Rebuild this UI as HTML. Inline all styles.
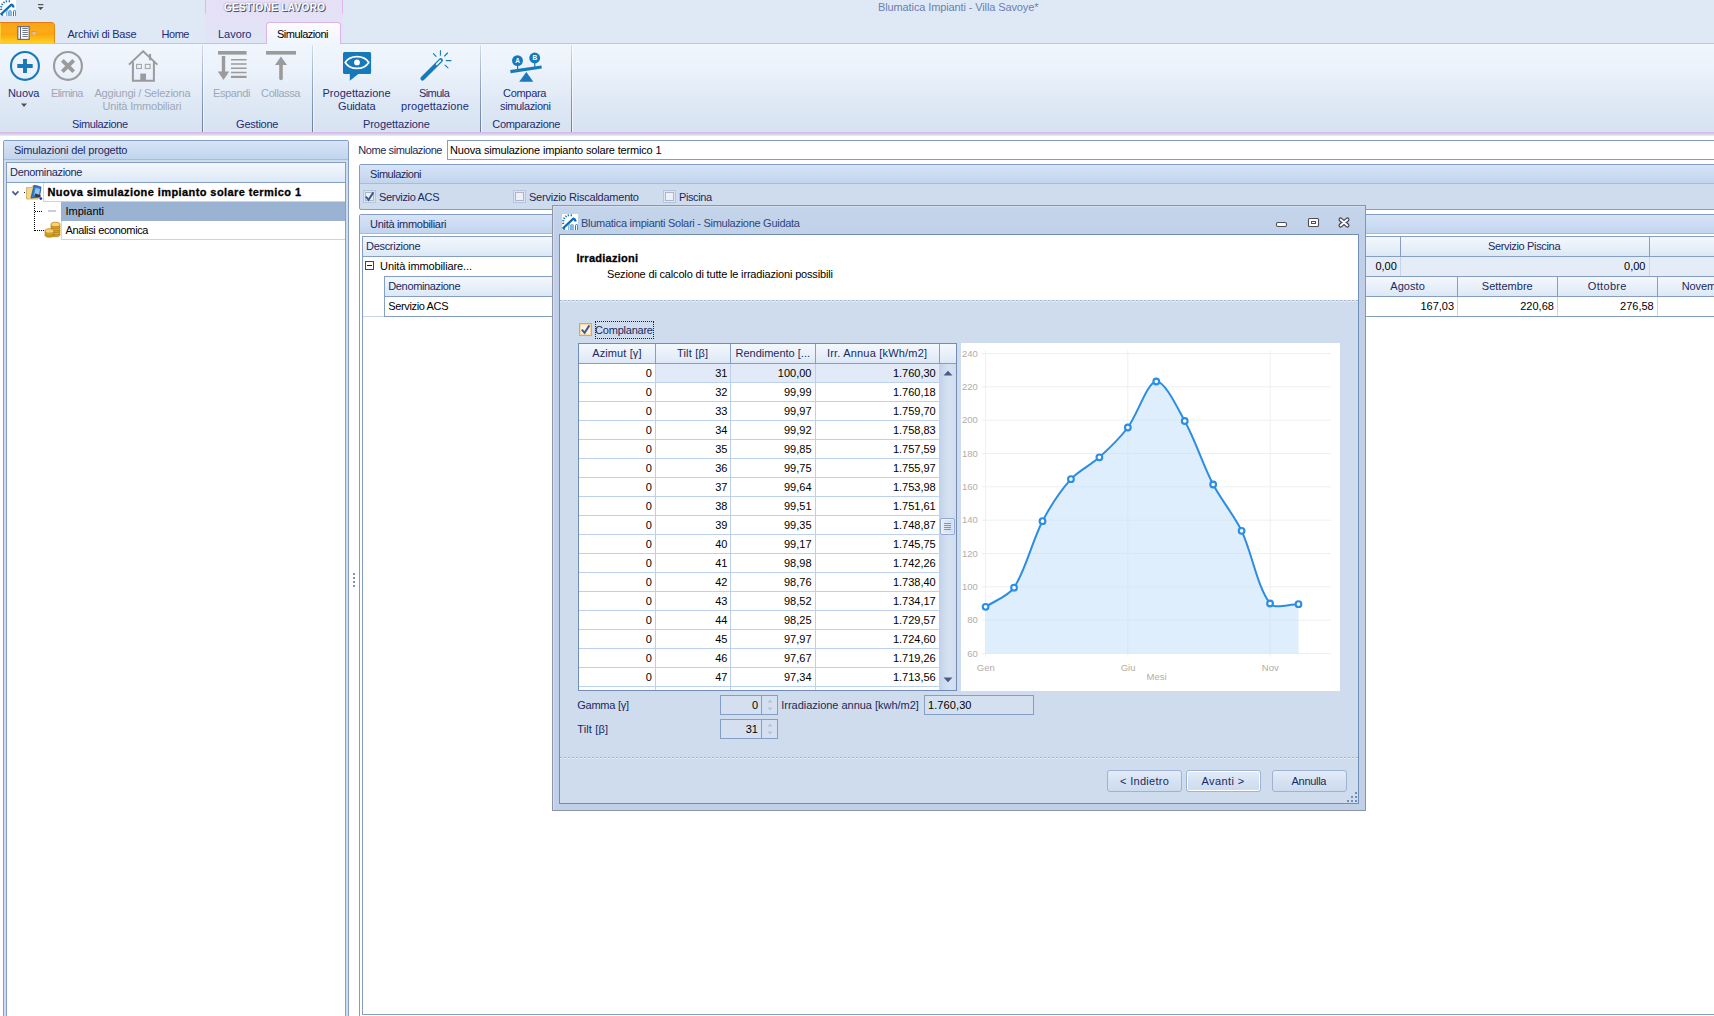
<!DOCTYPE html>
<html><head><meta charset="utf-8"><title>Blumatica Impianti</title>
<style>
*{box-sizing:border-box;margin:0;padding:0}
html,body{width:1714px;height:1016px;overflow:hidden;background:#fff}
body{position:relative;font-family:"Liberation Sans",sans-serif;font-size:11px;color:#000}
div,span,svg{position:absolute}
.t{white-space:nowrap;display:block}
</style></head>
<body>
<div style="left:0px;top:0px;width:1714px;height:43px;background:#dfe9f5;"></div>
<div style="left:205px;top:0px;width:138px;height:43px;background:linear-gradient(#e6e0f7,#e3e2f6 60%,#e0e6f5);"></div>
<div style="left:205px;top:0px;width:1px;height:15px;background:linear-gradient(#dcb6ec,#dcb6ec 85%,rgba(220,182,236,0));"></div>
<div style="left:342px;top:0px;width:1px;height:15px;background:linear-gradient(#dcb6ec,#dcb6ec 85%,rgba(220,182,236,0));"></div>
<span id="t1" class="t" style="top:0.84px;line-height:13px;height:13px;font-size:10px;color:#fff;font-weight:bold;letter-spacing:0.322px;left:224.00px;text-shadow:1px 1px 0 #4e5470,0 0 2px #8085a0;">GESTIONE LAVORO</span>
<span id="t2" class="t" style="top:0.19px;line-height:14px;height:14px;font-size:11px;color:#6a80b4;letter-spacing:-0.114px;left:878.00px;">Blumatica Impianti - Villa Savoye*</span>
<svg style="left:0px;top:0px;" width="16" height="16" viewBox="0 0 16 16"><rect width="16" height="16" fill="#fff"/><path d="M0.6 14.6L11.4 4.6C12.6 5 13.4 6 13.7 7.4" stroke="#0f6cb6" stroke-width="2.2" fill="none" stroke-linejoin="round"/><path d="M1.6 14.2l1.2 1.4" stroke="#0f6cb6" stroke-width="1.6"/><path d="M0.2 9.6l2 -0.4M0.3 6.6l2 0.3M1.3 3.7l1.8 1M3.3 1.6l1.4 1.5M6 0.4l0.7 1.9M9.4 0.2l-0.2 2" stroke="#1571bb" stroke-width="1.3"/><path d="M6.7 16v-4.6a0.8 0.8 0 0 1 1.6 0V16" fill="none" stroke="#5ea2d8" stroke-width="0.9"/><path d="M8.9 16v-4.4a1.3 1.3 0 0 1 2.6 0V16z" fill="#8cbde6" stroke="#6aabdc" stroke-width="0.7"/><path d="M13.5 16v-4.4a1.1 1.1 0 0 1 2.2 0V16" fill="none" stroke="#1a7ac0" stroke-width="1"/></svg>
<svg style="left:36px;top:2px;" width="10" height="10" viewBox="0 0 10 10"><rect x="2" y="2" width="5.4" height="1.2" fill="#555"/><path d="M1.8 5h5.8l-2.9 3.2z" fill="#555"/><path d="M1.8 6l2.9 3.2l2.9 -3.2" fill="none" stroke="#fff" stroke-width="0.8" opacity="0.8"/></svg>
<div style="left:0px;top:43px;width:1714px;height:1px;background:#dcb4ea;"></div>
<div style="left:0px;top:22px;width:55px;height:21px;background:linear-gradient(#f9a21a,#fbab18 40%,#fba50c 55%,#fdbd1c 80%,#ffd326);border-top:1px solid #e37a10;border-right:1px solid #e88a10;border-radius:0 4px 0 0;box-shadow:inset 1px 0 0 #ffcf3a;"></div>
<svg style="left:16px;top:25px;" width="24" height="16" viewBox="0 0 24 16"><rect x="1.85" y="1.65" width="11.3" height="12.7" fill="#fff" stroke="#5d667c" stroke-width="1.1"/><rect x="3.9" y="1.5" width="1.1" height="13" fill="#5d667c"/><path d="M6.4 3.5h5.4M6.4 5.5h5.4M6.4 7.5h5.4M6.4 9.5h5.4M6.4 11.5h5.4" stroke="#5d667c" stroke-width="0.9"/><path d="M15.4 6.6h5.4l-2.7 2.9z" fill="#e08a10"/><path d="M15.6 7.2h5l-2.5 2.7z" fill="#cfc6e4"/></svg>
<span id="t3" class="t" style="top:26.69px;line-height:14px;height:14px;font-size:11px;color:#1c2d74;letter-spacing:-0.268px;left:67.50px;">Archivi di Base</span>
<span id="t4" class="t" style="top:26.69px;line-height:14px;height:14px;font-size:11px;color:#1c2d74;letter-spacing:-0.452px;left:161.50px;">Home</span>
<span id="t5" class="t" style="top:26.69px;line-height:14px;height:14px;font-size:11px;color:#1c2d74;letter-spacing:-0.029px;left:218.00px;">Lavoro</span>
<div style="left:266px;top:22px;width:75px;height:23px;background:linear-gradient(#fdfcff,#f0f5fd);box-shadow:inset 0 1px 0 #fff;border:1px solid #dcb4ea;border-bottom:none;border-radius:4px 4px 0 0;"></div>
<span id="t6" class="t" style="top:26.69px;line-height:14px;height:14px;font-size:11px;color:#000;letter-spacing:-0.476px;left:277.00px;">Simulazioni</span>
<div style="left:0px;top:44px;width:1714px;height:88px;background:linear-gradient(#f0f6fd,#ebf2fb 30%,#dfe9f5 65%,#d7e2f2);"></div>
<div style="left:0px;top:132px;width:1714px;height:1px;background:#d9b6e6;"></div>
<div style="left:0px;top:133px;width:1714px;height:3px;background:linear-gradient(#c3cbe2,#d3daea 50%,#eceff6);"></div>
<div style="left:202px;top:45px;width:1px;height:87px;background:linear-gradient(rgba(150,172,205,0.35),#92a6c8 45%,#6a7fa3);"></div>
<div style="left:203px;top:45px;width:1px;height:87px;background:rgba(255,255,255,0.6);"></div>
<div style="left:312px;top:45px;width:1px;height:87px;background:linear-gradient(rgba(150,172,205,0.35),#92a6c8 45%,#6a7fa3);"></div>
<div style="left:313px;top:45px;width:1px;height:87px;background:rgba(255,255,255,0.6);"></div>
<div style="left:480px;top:45px;width:1px;height:87px;background:linear-gradient(rgba(150,172,205,0.35),#92a6c8 45%,#6a7fa3);"></div>
<div style="left:481px;top:45px;width:1px;height:87px;background:rgba(255,255,255,0.6);"></div>
<div style="left:571px;top:45px;width:1px;height:87px;background:linear-gradient(rgba(150,172,205,0.35),#92a6c8 45%,#6a7fa3);"></div>
<div style="left:572px;top:45px;width:1px;height:87px;background:rgba(255,255,255,0.6);"></div>
<span id="t7" class="t" style="top:116.69px;line-height:14px;height:14px;font-size:11px;color:#1c2d74;letter-spacing:-0.392px;left:72.00px;">Simulazione</span>
<span id="t8" class="t" style="top:116.69px;line-height:14px;height:14px;font-size:11px;color:#1c2d74;letter-spacing:-0.234px;left:236.10px;">Gestione</span>
<span id="t9" class="t" style="top:116.69px;line-height:14px;height:14px;font-size:11px;color:#1c2d74;letter-spacing:-0.074px;left:363.00px;">Progettazione</span>
<span id="t10" class="t" style="top:116.69px;line-height:14px;height:14px;font-size:11px;color:#1c2d74;letter-spacing:-0.300px;left:492.25px;">Comparazione</span>
<span id="t11" class="t" style="top:85.69px;line-height:14px;height:14px;font-size:11px;color:#1c2d74;letter-spacing:-0.077px;left:8.00px;">Nuova</span>
<svg style="left:20px;top:103px;" width="8" height="5" viewBox="0 0 8 5"><path d="M1 0.5h6l-3 3.5z" fill="#4b4f5e"/></svg>
<span id="t12" class="t" style="top:85.69px;line-height:14px;height:14px;font-size:11px;color:#9fa7b8;letter-spacing:-0.596px;left:51.00px;">Elimina</span>
<span id="t13" class="t" style="top:85.69px;line-height:14px;height:14px;font-size:11px;color:#9fa7b8;letter-spacing:-0.226px;left:94.50px;">Aggiungi / Seleziona</span>
<span id="t14" class="t" style="top:98.89px;line-height:14px;height:14px;font-size:11px;color:#9fa7b8;letter-spacing:-0.183px;left:102.50px;">Unità Immobiliari</span>
<span id="t15" class="t" style="top:85.69px;line-height:14px;height:14px;font-size:11px;color:#9fa7b8;letter-spacing:-0.376px;left:213.00px;">Espandi</span>
<span id="t16" class="t" style="top:85.69px;line-height:14px;height:14px;font-size:11px;color:#9fa7b8;letter-spacing:-0.400px;left:261.10px;">Collassa</span>
<span id="t17" class="t" style="top:85.69px;line-height:14px;height:14px;font-size:11px;color:#1c2d74;letter-spacing:0.010px;left:322.50px;">Progettazione</span>
<span id="t18" class="t" style="top:98.89px;line-height:14px;height:14px;font-size:11px;color:#1c2d74;letter-spacing:-0.172px;left:338.00px;">Guidata</span>
<span id="t19" class="t" style="top:85.69px;line-height:14px;height:14px;font-size:11px;color:#1c2d74;letter-spacing:-0.525px;left:418.90px;">Simula</span>
<span id="t20" class="t" style="top:98.89px;line-height:14px;height:14px;font-size:11px;color:#1c2d74;letter-spacing:0.102px;left:401.00px;">progettazione</span>
<span id="t21" class="t" style="top:85.69px;line-height:14px;height:14px;font-size:11px;color:#1c2d74;letter-spacing:-0.292px;left:503.00px;">Compara</span>
<span id="t22" class="t" style="top:98.89px;line-height:14px;height:14px;font-size:11px;color:#1c2d74;letter-spacing:-0.362px;left:500.10px;">simulazioni</span>
<svg style="left:9px;top:50px;" width="32" height="32" viewBox="0 0 32 32"><circle cx="15.95" cy="15.95" r="13.95" fill="none" stroke="#1779ba" stroke-width="2.1"/><path d="M8.3 16h15.4M16 9.1v13.9" stroke="#1779ba" stroke-width="3.9"/></svg>
<svg style="left:52px;top:50px;" width="32" height="32" viewBox="0 0 32 32"><circle cx="15.95" cy="15.95" r="13.95" fill="none" stroke="#9b9b9b" stroke-width="2.1"/><path d="M10.3 10.4l11.4 11.2M21.7 10.4l-11.4 11.2" stroke="#9b9b9b" stroke-width="3.9"/></svg>
<svg style="left:127px;top:50px;" width="32" height="33" viewBox="0 0 32 33"><path d="M1.9 14.6L16.15 1.2L30.4 14.6" fill="none" stroke="#9b9b9b" stroke-width="1.9" stroke-linejoin="miter"/><rect x="22.1" y="3.9" width="2" height="6.4" fill="#9b9b9b"/><path d="M5.9 12v18.85h21V12" fill="none" stroke="#9b9b9b" stroke-width="2"/><rect x="13.3" y="23.6" width="5.7" height="7.2" fill="#9b9b9b"/><rect x="9.6" y="14.4" width="4.8" height="4.1" fill="none" stroke="#a6a6a6" stroke-width="1.1"/><rect x="18.3" y="14.4" width="4.8" height="4.1" fill="none" stroke="#a6a6a6" stroke-width="1.1"/></svg>
<svg style="left:217px;top:50px;" width="32" height="32" viewBox="0 0 32 32"><rect x="1" y="1" width="28.6" height="3.6" fill="#9b9b9b"/><rect x="4.8" y="6" width="3.4" height="18" fill="#9b9b9b"/><path d="M0.8 21.5h11.4L6.5 30z" fill="#9b9b9b"/><path d="M14 9.8h15.6M14 14h15.6M14 18.2h15.6M14 22.5h15.6" stroke="#9b9b9b" stroke-width="1.6"/><path d="M14 26.9h15.6" stroke="#9b9b9b" stroke-width="2.2"/></svg>
<svg style="left:265px;top:50px;" width="32" height="32" viewBox="0 0 32 32"><rect x="1" y="1" width="30" height="3.6" fill="#9b9b9b"/><path d="M16 6.5l6 8.6h-12z" fill="#9b9b9b"/><path d="M16 13v15.5" stroke="#9b9b9b" stroke-width="3.6" stroke-linecap="round"/></svg>
<svg style="left:342px;top:51px;" width="32" height="32" viewBox="0 0 32 32"><path d="M2.5 1.1h25.1a1.5 1.5 0 0 1 1.5 1.5v18.8a1.5 1.5 0 0 1 -1.5 1.5H16.3L7.8 29.8V22.9H2.5a1.5 1.5 0 0 1 -1.5 -1.5V2.6a1.5 1.5 0 0 1 1.5 -1.5z" fill="#1779ba"/><path d="M3.2 11.5C8.2 3.6 21.8 3.6 26.8 11.5C21.8 19.4 8.2 19.4 3.2 11.5z" fill="none" stroke="#fff" stroke-width="1.7"/><circle cx="15" cy="11.4" r="2.9" fill="#fff"/></svg>
<svg style="left:418px;top:48px;" width="36" height="36" viewBox="0 0 36 36"><path d="M4.5 30.5L22.8 12.2" stroke="#1779ba" stroke-width="4.2" stroke-linecap="round"/><path d="M18.6 16.4L22.4 12.6" stroke="#fff" stroke-width="1.6" stroke-linecap="round"/><path d="M22.4 2.6v4.6M15.4 5.6l2.6 2.8M29.6 5l-3 3M28.2 12.6h4.8M27 17.2l3 2.6" stroke="#1779ba" stroke-width="1.1" stroke-linecap="round"/></svg>
<svg style="left:508px;top:50px;" width="36" height="34" viewBox="0 0 36 34"><path d="M2.4 21.6L33.6 17" stroke="#1779ba" stroke-width="3.2"/><path d="M18.3 22.1l7 9.7H11.2z" fill="#1779ba"/><circle cx="9.5" cy="10.6" r="5.45" fill="#1779ba"/><circle cx="26.7" cy="8" r="5.45" fill="#1779ba"/><path d="M9.6 15v5.5M26.8 12.5v5.5" stroke="#1779ba" stroke-width="1.2"/><text x="9.6" y="13" font-size="6.5" font-weight="bold" fill="#fff" text-anchor="middle" font-family="Liberation Sans">A</text><text x="26.8" y="10.4" font-size="6.5" font-weight="bold" fill="#fff" text-anchor="middle" font-family="Liberation Sans">B</text></svg>
<div style="left:3px;top:140px;width:346px;height:900px;background:#cfdcee;border:1px solid #859ec5;border-radius:2px 2px 0 0;"></div>
<div style="left:4px;top:141px;width:344px;height:19px;background:linear-gradient(#d6e4f7,#c2d5ee);border-bottom:1px solid #a9bbd8;"></div>
<span id="t23" class="t" style="top:143.19px;line-height:14px;height:14px;font-size:11px;color:#1a2a5c;letter-spacing:-0.166px;left:13.90px;">Simulazioni del progetto</span>
<div style="left:6px;top:162px;width:340px;height:880px;background:#fff;border:1px solid #859ec5;"></div>
<div style="left:7px;top:163px;width:338px;height:19px;background:linear-gradient(#f4f8fd,#dde8f6);"></div>
<div style="left:7px;top:182px;width:338px;height:1px;background:#859ec5;"></div>
<span id="t24" class="t" style="top:164.94px;line-height:14px;height:14px;font-size:11px;color:#1a2a5c;letter-spacing:-0.337px;left:10.10px;">Denominazione</span>
<div style="left:43px;top:183px;width:302px;height:19px;background:#fff;border-left:1px solid #c5d5ec;border-bottom:1px solid #c5d5ec;"></div>
<span id="t25" class="t" style="top:184.94px;line-height:14px;height:14px;font-size:11px;color:#000;font-weight:bold;letter-spacing:0.418px;left:47.50px;-webkit-text-stroke:0.3px #000;">Nuova simulazione impianto solare termico 1</span>
<div style="left:61px;top:202px;width:284px;height:19px;background:#9ab3d2;"></div>
<span id="t26" class="t" style="top:203.94px;line-height:14px;height:14px;font-size:11px;color:#000;letter-spacing:-0.003px;left:65.50px;">Impianti</span>
<div style="left:61px;top:221px;width:284px;height:19px;background:#fff;border-left:1px solid #c5d5ec;border-bottom:1px solid #c5d5ec;"></div>
<span id="t27" class="t" style="top:222.69px;line-height:14px;height:14px;font-size:11px;color:#000;letter-spacing:-0.354px;left:65.50px;">Analisi economica</span>
<svg style="left:11px;top:189px;" width="10" height="8" viewBox="0 0 10 8"><path d="M1.4 2.4l3 3.2l3 -3.2" fill="none" stroke="#4a5a88" stroke-width="1.7"/></svg>
<div style="left:24px;top:192px;width:1px;height:1px;background:#222;"></div>
<svg style="left:26px;top:184px;" width="17" height="17" viewBox="0 0 17 17"><path d="M0.5 3.5h5l1.5 -2h5v13.5h-11.5z" fill="#f5d58c" stroke="#c9a85a" stroke-width="0.8"/><path d="M8 1.5l7 1.5l-1.5 10l-8.5 1z" fill="#2f7fd0" stroke="#1c4f94" stroke-width="0.8"/><path d="M9.5 4l4.5 1l-1 6l-5 0.5z" fill="#8fc4f2"/><path d="M9 9.5l5.5 1.5v2.5l-6 -1z" fill="#3a3a44"/><circle cx="14.8" cy="14.6" r="1.4" fill="#1030e0"/></svg>
<div style="left:34px;top:202px;width:1px;height:29px;background:repeating-linear-gradient(#000 0 1px,transparent 1px 2px);"></div>
<div style="left:35px;top:211px;width:8px;height:1px;background:repeating-linear-gradient(90deg,#000 0 1px,transparent 1px 2px);"></div>
<div style="left:35px;top:230px;width:10px;height:1px;background:repeating-linear-gradient(90deg,#000 0 1px,transparent 1px 2px);"></div>
<div style="left:48px;top:210px;width:8px;height:2px;background:#c9ccd2;"></div>
<svg style="left:44px;top:221px;" width="17" height="17" viewBox="0 0 17 17"><g stroke="#a87412" stroke-width="0.7"><ellipse cx="11.5" cy="13.5" rx="4.6" ry="2.2" fill="#e0a020"/><ellipse cx="11.5" cy="11.5" rx="4.6" ry="2.2" fill="#eab030"/><ellipse cx="11.5" cy="9.5" rx="4.6" ry="2.2" fill="#e0a020"/><ellipse cx="11.5" cy="7.5" rx="4.6" ry="2.2" fill="#eab030"/><ellipse cx="11.5" cy="5.5" rx="4.6" ry="2.2" fill="#e0a020"/><ellipse cx="11.5" cy="3.5" rx="4.6" ry="2.2" fill="#f6d468"/><ellipse cx="5.5" cy="14" rx="4.6" ry="2.2" fill="#e0a020"/><ellipse cx="5.5" cy="12" rx="4.6" ry="2.2" fill="#eab030"/><ellipse cx="5.5" cy="10" rx="4.6" ry="2.2" fill="#f6d468"/></g></svg>
<div style="left:353px;top:573px;width:2px;height:2px;background:#7d93b8;"></div>
<div style="left:353px;top:577px;width:2px;height:2px;background:#7d93b8;"></div>
<div style="left:353px;top:581px;width:2px;height:2px;background:#7d93b8;"></div>
<div style="left:353px;top:585px;width:2px;height:2px;background:#7d93b8;"></div>
<span id="t28" class="t" style="top:142.94px;line-height:14px;height:14px;font-size:11px;color:#1a2a5c;letter-spacing:-0.416px;left:358.25px;">Nome simulazione</span>
<div style="left:447px;top:140px;width:1300px;height:20px;background:#fff;border:1px solid #859ec5;"></div>
<span id="t29" class="t" style="top:142.94px;line-height:14px;height:14px;font-size:11px;color:#000;letter-spacing:-0.178px;left:450.10px;">Nuova simulazione impianto solare termico 1</span>
<div style="left:359px;top:164px;width:1400px;height:46px;background:#cfdcee;border:1px solid #859ec5;border-radius:2px 0 0 2px;"></div>
<div style="left:360px;top:165px;width:1400px;height:19px;background:linear-gradient(#d6e4f7,#c2d5ee);border-bottom:1px solid #a9bbd8;"></div>
<span id="t30" class="t" style="top:166.69px;line-height:14px;height:14px;font-size:11px;color:#1a2a5c;letter-spacing:-0.486px;left:370.10px;">Simulazioni</span>
<svg style="left:363px;top:190px;" width="13" height="13" viewBox="0 0 13 13"><rect x="0.5" y="0.5" width="12" height="12" fill="#dbe5f3" stroke="#b4c5e0"/><rect x="2.5" y="2.5" width="8" height="8" fill="#eef0f3" stroke="#aeb6c6"/><path d="M2.8 6.6L5.6 9.8L10.4 2.4" stroke="#3c5c96" stroke-width="2" fill="none"/></svg>
<span id="t31" class="t" style="top:190.09px;line-height:14px;height:14px;font-size:11px;color:#1a2a5c;letter-spacing:-0.345px;left:379.10px;">Servizio ACS</span>
<svg style="left:513px;top:190px;" width="13" height="13" viewBox="0 0 13 13"><rect x="0.5" y="0.5" width="12" height="12" fill="#dbe5f3" stroke="#b4c5e0"/><rect x="2.5" y="2.5" width="8" height="8" fill="#eef0f3" stroke="#aeb6c6"/></svg>
<span id="t32" class="t" style="top:190.09px;line-height:14px;height:14px;font-size:11px;color:#1a2a5c;letter-spacing:-0.236px;left:529.00px;">Servizio Riscaldamento</span>
<svg style="left:663px;top:190px;" width="13" height="13" viewBox="0 0 13 13"><rect x="0.5" y="0.5" width="12" height="12" fill="#dbe5f3" stroke="#b4c5e0"/><rect x="2.5" y="2.5" width="8" height="8" fill="#eef0f3" stroke="#aeb6c6"/></svg>
<span id="t33" class="t" style="top:190.09px;line-height:14px;height:14px;font-size:11px;color:#1a2a5c;letter-spacing:-0.411px;left:679.00px;">Piscina</span>
<div style="left:359px;top:214px;width:1400px;height:830px;background:#fff;border:1px solid #859ec5;border-radius:2px 0 0 0;"></div>
<div style="left:360px;top:215px;width:1400px;height:19px;background:linear-gradient(#d6e4f7,#c2d5ee);border-bottom:1px solid #a9bbd8;"></div>
<span id="t34" class="t" style="top:216.69px;line-height:14px;height:14px;font-size:11px;color:#1a2a5c;letter-spacing:-0.307px;left:370.10px;">Unità immobiliari</span>
<div style="left:362px;top:236px;width:1400px;height:779px;background:#fff;border:1px solid #859ec5;"></div>
<div style="left:363px;top:237px;width:1400px;height:19px;background:linear-gradient(#f4f8fd,#dde8f6);"></div>
<div style="left:363px;top:256px;width:1400px;height:1px;background:#859ec5;"></div>
<span id="t35" class="t" style="top:238.59px;line-height:14px;height:14px;font-size:11px;color:#1a2a5c;letter-spacing:-0.297px;left:366.00px;">Descrizione</span>
<div style="left:1400px;top:237px;width:1px;height:19px;background:#859ec5;"></div>
<div style="left:1400px;top:257px;width:1px;height:19px;background:#c5d5ec;"></div>
<div style="left:1649px;top:237px;width:1px;height:19px;background:#859ec5;"></div>
<div style="left:1649px;top:257px;width:1px;height:19px;background:#c5d5ec;"></div>
<span id="t36" class="t" style="top:239.19px;line-height:14px;height:14px;font-size:11px;color:#1a2a5c;letter-spacing:-0.343px;left:1488.00px;">Servizio Piscina</span>
<div style="left:552px;top:257px;width:1200px;height:19px;background:#e4ecf7;"></div>
<div style="left:1400px;top:257px;width:1px;height:19px;background:#c5d5ec;"></div>
<div style="left:1649px;top:257px;width:1px;height:19px;background:#c5d5ec;"></div>
<svg style="left:365px;top:261px;" width="10" height="10" viewBox="0 0 10 10"><rect x="0.5" y="0.5" width="8" height="8" fill="#fff" stroke="#444"/><path d="M2 4.5h5" stroke="#222" stroke-width="1"/></svg>
<span id="t37" class="t" style="top:258.94px;line-height:14px;height:14px;font-size:11px;color:#000;letter-spacing:-0.118px;left:380.10px;">Unità immobiliare...</span>
<span id="t38" class="t" style="top:258.94px;line-height:14px;height:14px;font-size:11px;color:#000;right:317.20px;">0,00</span>
<span id="t39" class="t" style="top:258.94px;line-height:14px;height:14px;font-size:11px;color:#000;right:68.50px;">0,00</span>
<div style="left:384px;top:276px;width:1400px;height:41px;background:#fff;border:1px solid #859ec5;"></div>
<div style="left:385px;top:277px;width:1400px;height:19px;background:linear-gradient(#f4f8fd,#dde8f6);"></div>
<div style="left:385px;top:296px;width:1400px;height:1px;background:#859ec5;"></div>
<span id="t40" class="t" style="top:279.19px;line-height:14px;height:14px;font-size:11px;color:#1a2a5c;letter-spacing:-0.349px;left:388.25px;">Denominazione</span>
<span id="t41" class="t" style="top:298.94px;line-height:14px;height:14px;font-size:11px;color:#000;letter-spacing:-0.359px;left:388.25px;">Servizio ACS</span>
<div style="left:1357px;top:277px;width:1px;height:19px;background:#859ec5;"></div>
<div style="left:1357px;top:297px;width:1px;height:19px;background:#c5d5ec;"></div>
<div style="left:1457px;top:277px;width:1px;height:19px;background:#859ec5;"></div>
<div style="left:1457px;top:297px;width:1px;height:19px;background:#c5d5ec;"></div>
<div style="left:1557px;top:277px;width:1px;height:19px;background:#859ec5;"></div>
<div style="left:1557px;top:297px;width:1px;height:19px;background:#c5d5ec;"></div>
<div style="left:1657px;top:277px;width:1px;height:19px;background:#859ec5;"></div>
<div style="left:1657px;top:297px;width:1px;height:19px;background:#c5d5ec;"></div>
<span id="t42" class="t" style="top:279.19px;line-height:14px;height:14px;font-size:11px;color:#1a2a5c;letter-spacing:0.049px;left:1390.30px;">Agosto</span>
<span id="t43" class="t" style="top:279.19px;line-height:14px;height:14px;font-size:11px;color:#1a2a5c;letter-spacing:0.019px;left:1481.80px;">Settembre</span>
<span id="t44" class="t" style="top:279.19px;line-height:14px;height:14px;font-size:11px;color:#1a2a5c;letter-spacing:0.334px;left:1587.80px;">Ottobre</span>
<span id="t45" class="t" style="top:279.19px;line-height:14px;height:14px;font-size:11px;color:#1a2a5c;letter-spacing:-0.150px;left:1681.80px;">Novembre</span>
<span id="t46" class="t" style="top:298.94px;line-height:14px;height:14px;font-size:11px;color:#000;right:259.90px;">167,03</span>
<span id="t47" class="t" style="top:298.94px;line-height:14px;height:14px;font-size:11px;color:#000;right:160.10px;">220,68</span>
<span id="t48" class="t" style="top:298.94px;line-height:14px;height:14px;font-size:11px;color:#000;right:60.30px;">276,58</span>
<div style="left:363px;top:316px;width:21px;height:1px;background:#c5d5ec;"></div>
<div style="left:552px;top:205px;width:814px;height:606px;background:linear-gradient(#c5d5eb,#bfd0e8 30px,#bfd0e8);border:1px solid #8d94a6;"></div>
<div style="left:553px;top:206px;width:812px;height:1px;background:#d3dff0;"></div>
<div style="left:553px;top:206px;width:1px;height:604px;background:#d3dff0;"></div>
<svg style="left:562px;top:214px;" width="16" height="16" viewBox="0 0 16 16"><rect width="16" height="16" fill="#fff"/><path d="M0.6 14.6L11.4 4.6C12.6 5 13.4 6 13.7 7.4" stroke="#0f6cb6" stroke-width="2.2" fill="none" stroke-linejoin="round"/><path d="M1.6 14.2l1.2 1.4" stroke="#0f6cb6" stroke-width="1.6"/><path d="M0.2 9.6l2 -0.4M0.3 6.6l2 0.3M1.3 3.7l1.8 1M3.3 1.6l1.4 1.5M6 0.4l0.7 1.9M9.4 0.2l-0.2 2" stroke="#1571bb" stroke-width="1.3"/><path d="M6.7 16v-4.6a0.8 0.8 0 0 1 1.6 0V16" fill="none" stroke="#5ea2d8" stroke-width="0.9"/><path d="M8.9 16v-4.4a1.3 1.3 0 0 1 2.6 0V16z" fill="#8cbde6" stroke="#6aabdc" stroke-width="0.7"/><path d="M13.5 16v-4.4a1.1 1.1 0 0 1 2.2 0V16" fill="none" stroke="#1a7ac0" stroke-width="1"/></svg>
<span id="t49" class="t" style="top:215.69px;line-height:14px;height:14px;font-size:11px;color:#2d477c;letter-spacing:-0.277px;left:581.00px;">Blumatica impianti Solari - Simulazione Guidata</span>
<svg style="left:1275px;top:221px;" width="14" height="8" viewBox="0 0 14 8"><rect x="1.5" y="1.5" width="10" height="4" rx="1.5" fill="#fff" stroke="#4d4d5c" stroke-width="1.1"/></svg>
<svg style="left:1307px;top:217px;" width="14" height="11" viewBox="0 0 14 11"><rect x="1.5" y="1.5" width="10" height="8" rx="1" fill="#fff" stroke="#4d4d5c" stroke-width="1.1"/><rect x="4.5" y="4.5" width="4" height="2" fill="#fff" stroke="#4d4d5c" stroke-width="1"/></svg>
<svg style="left:1337px;top:216px;" width="15" height="13" viewBox="0 0 15 13"><path d="M3.6 3.6L10.4 9.4M10.4 3.6L3.6 9.4" stroke="#3f3850" stroke-width="4.2" stroke-linecap="round"/><path d="M3.6 3.6L10.4 9.4M10.4 3.6L3.6 9.4" stroke="#fff" stroke-width="2" stroke-linecap="round"/></svg>
<div style="left:559px;top:234px;width:800px;height:570px;background:#cfdcee;border:1px solid #6f8db5;"></div>
<div style="left:560px;top:235px;width:798px;height:65px;background:#fff;"></div>
<div style="left:560px;top:300px;width:798px;height:1px;background:repeating-linear-gradient(90deg,#a7b6cf 0 2px,transparent 2px 4px);"></div>
<div style="left:560px;top:301px;width:798px;height:1px;background:repeating-linear-gradient(90deg,#e6edf7 0 2px,transparent 2px 4px);"></div>
<div style="left:560px;top:757px;width:798px;height:1px;background:repeating-linear-gradient(90deg,#a7b6cf 0 2px,transparent 2px 4px);"></div>
<div style="left:560px;top:758px;width:798px;height:1px;background:repeating-linear-gradient(90deg,#e6edf7 0 2px,transparent 2px 4px);"></div>
<span id="t50" class="t" style="top:250.69px;line-height:14px;height:14px;font-size:11px;color:#000;font-weight:bold;letter-spacing:0.255px;left:576.50px;-webkit-text-stroke:0.3px #000;">Irradiazioni</span>
<span id="t51" class="t" style="top:266.94px;line-height:14px;height:14px;font-size:11px;color:#000;letter-spacing:-0.171px;left:607.00px;">Sezione di calcolo di tutte le irradiazioni possibili</span>
<svg style="left:579px;top:323px;" width="13" height="13" viewBox="0 0 13 13"><rect x="0.5" y="0.5" width="12" height="12" fill="#fbd9a4" stroke="#e9a252"/><rect x="2" y="2" width="9" height="9" fill="#fef3e0"/><path d="M2.8 6.6L5.6 9.8L10.4 2.4" stroke="#3c5c96" stroke-width="2" fill="none"/></svg>
<div style="left:595px;top:321px;width:59px;height:18px;border:1px dotted #222;"></div>
<span id="t52" class="t" style="top:322.94px;line-height:14px;height:14px;font-size:11px;color:#1a2a5c;letter-spacing:-0.225px;left:595.10px;">Complanare</span>
<div style="left:578px;top:343px;width:379px;height:348px;background:#fff;border:1px solid #6f8db5;"></div>
<div style="left:579px;top:344px;width:377px;height:19px;background:linear-gradient(#f4f8fd,#dde8f6);"></div>
<div style="left:579px;top:363px;width:377px;height:1px;background:#859ec5;"></div>
<div style="left:655px;top:344px;width:1px;height:19px;background:#859ec5;"></div>
<div style="left:730px;top:344px;width:1px;height:19px;background:#859ec5;"></div>
<div style="left:815px;top:344px;width:1px;height:19px;background:#859ec5;"></div>
<div style="left:939px;top:344px;width:1px;height:19px;background:#859ec5;"></div>
<span id="t53" class="t" style="top:346.19px;line-height:14px;height:14px;font-size:11px;color:#1a2a5c;letter-spacing:0.106px;left:592.25px;">Azimut [γ]</span>
<span id="t54" class="t" style="top:346.19px;line-height:14px;height:14px;font-size:11px;color:#1a2a5c;letter-spacing:0.177px;left:677.00px;">Tilt [β]</span>
<span id="t55" class="t" style="top:346.19px;line-height:14px;height:14px;font-size:11px;color:#1a2a5c;letter-spacing:-0.008px;left:735.50px;">Rendimento [...</span>
<span id="t56" class="t" style="top:346.19px;line-height:14px;height:14px;font-size:11px;color:#1a2a5c;letter-spacing:0.189px;left:827.00px;">Irr. Annua [kWh/m2]</span>
<div style="left:656px;top:364px;width:283px;height:18px;background:#e1eaf6;"></div>
<div style="left:579px;top:382px;width:360px;height:1px;background:#bdd0ee;"></div>
<div style="left:579px;top:401px;width:360px;height:1px;background:#bdd0ee;"></div>
<div style="left:579px;top:420px;width:360px;height:1px;background:#bdd0ee;"></div>
<div style="left:579px;top:439px;width:360px;height:1px;background:#bdd0ee;"></div>
<div style="left:579px;top:458px;width:360px;height:1px;background:#bdd0ee;"></div>
<div style="left:579px;top:477px;width:360px;height:1px;background:#bdd0ee;"></div>
<div style="left:579px;top:496px;width:360px;height:1px;background:#bdd0ee;"></div>
<div style="left:579px;top:515px;width:360px;height:1px;background:#bdd0ee;"></div>
<div style="left:579px;top:534px;width:360px;height:1px;background:#bdd0ee;"></div>
<div style="left:579px;top:553px;width:360px;height:1px;background:#bdd0ee;"></div>
<div style="left:579px;top:572px;width:360px;height:1px;background:#bdd0ee;"></div>
<div style="left:579px;top:591px;width:360px;height:1px;background:#bdd0ee;"></div>
<div style="left:579px;top:610px;width:360px;height:1px;background:#bdd0ee;"></div>
<div style="left:579px;top:629px;width:360px;height:1px;background:#bdd0ee;"></div>
<div style="left:579px;top:648px;width:360px;height:1px;background:#bdd0ee;"></div>
<div style="left:579px;top:667px;width:360px;height:1px;background:#bdd0ee;"></div>
<div style="left:579px;top:686px;width:360px;height:1px;background:#bdd0ee;"></div>
<div style="left:655px;top:364px;width:1px;height:326px;background:#bdd0ee;"></div>
<div style="left:730px;top:364px;width:1px;height:326px;background:#bdd0ee;"></div>
<div style="left:815px;top:364px;width:1px;height:326px;background:#bdd0ee;"></div>
<span id="t57" class="t" style="top:365.69px;line-height:14px;height:14px;font-size:11px;color:#000;right:1062.25px;">0</span>
<span id="t58" class="t" style="top:365.69px;line-height:14px;height:14px;font-size:11px;color:#000;right:986.50px;">31</span>
<span id="t59" class="t" style="top:365.69px;line-height:14px;height:14px;font-size:11px;color:#000;right:902.50px;">100,00</span>
<span id="t60" class="t" style="top:365.69px;line-height:14px;height:14px;font-size:11px;color:#000;right:778.25px;">1.760,30</span>
<span id="t61" class="t" style="top:384.69px;line-height:14px;height:14px;font-size:11px;color:#000;right:1062.25px;">0</span>
<span id="t62" class="t" style="top:384.69px;line-height:14px;height:14px;font-size:11px;color:#000;right:986.50px;">32</span>
<span id="t63" class="t" style="top:384.69px;line-height:14px;height:14px;font-size:11px;color:#000;right:902.50px;">99,99</span>
<span id="t64" class="t" style="top:384.69px;line-height:14px;height:14px;font-size:11px;color:#000;right:778.25px;">1.760,18</span>
<span id="t65" class="t" style="top:403.69px;line-height:14px;height:14px;font-size:11px;color:#000;right:1062.25px;">0</span>
<span id="t66" class="t" style="top:403.69px;line-height:14px;height:14px;font-size:11px;color:#000;right:986.50px;">33</span>
<span id="t67" class="t" style="top:403.69px;line-height:14px;height:14px;font-size:11px;color:#000;right:902.50px;">99,97</span>
<span id="t68" class="t" style="top:403.69px;line-height:14px;height:14px;font-size:11px;color:#000;right:778.25px;">1.759,70</span>
<span id="t69" class="t" style="top:422.69px;line-height:14px;height:14px;font-size:11px;color:#000;right:1062.25px;">0</span>
<span id="t70" class="t" style="top:422.69px;line-height:14px;height:14px;font-size:11px;color:#000;right:986.50px;">34</span>
<span id="t71" class="t" style="top:422.69px;line-height:14px;height:14px;font-size:11px;color:#000;right:902.50px;">99,92</span>
<span id="t72" class="t" style="top:422.69px;line-height:14px;height:14px;font-size:11px;color:#000;right:778.25px;">1.758,83</span>
<span id="t73" class="t" style="top:441.69px;line-height:14px;height:14px;font-size:11px;color:#000;right:1062.25px;">0</span>
<span id="t74" class="t" style="top:441.69px;line-height:14px;height:14px;font-size:11px;color:#000;right:986.50px;">35</span>
<span id="t75" class="t" style="top:441.69px;line-height:14px;height:14px;font-size:11px;color:#000;right:902.50px;">99,85</span>
<span id="t76" class="t" style="top:441.69px;line-height:14px;height:14px;font-size:11px;color:#000;right:778.25px;">1.757,59</span>
<span id="t77" class="t" style="top:460.69px;line-height:14px;height:14px;font-size:11px;color:#000;right:1062.25px;">0</span>
<span id="t78" class="t" style="top:460.69px;line-height:14px;height:14px;font-size:11px;color:#000;right:986.50px;">36</span>
<span id="t79" class="t" style="top:460.69px;line-height:14px;height:14px;font-size:11px;color:#000;right:902.50px;">99,75</span>
<span id="t80" class="t" style="top:460.69px;line-height:14px;height:14px;font-size:11px;color:#000;right:778.25px;">1.755,97</span>
<span id="t81" class="t" style="top:479.69px;line-height:14px;height:14px;font-size:11px;color:#000;right:1062.25px;">0</span>
<span id="t82" class="t" style="top:479.69px;line-height:14px;height:14px;font-size:11px;color:#000;right:986.50px;">37</span>
<span id="t83" class="t" style="top:479.69px;line-height:14px;height:14px;font-size:11px;color:#000;right:902.50px;">99,64</span>
<span id="t84" class="t" style="top:479.69px;line-height:14px;height:14px;font-size:11px;color:#000;right:778.25px;">1.753,98</span>
<span id="t85" class="t" style="top:498.69px;line-height:14px;height:14px;font-size:11px;color:#000;right:1062.25px;">0</span>
<span id="t86" class="t" style="top:498.69px;line-height:14px;height:14px;font-size:11px;color:#000;right:986.50px;">38</span>
<span id="t87" class="t" style="top:498.69px;line-height:14px;height:14px;font-size:11px;color:#000;right:902.50px;">99,51</span>
<span id="t88" class="t" style="top:498.69px;line-height:14px;height:14px;font-size:11px;color:#000;right:778.25px;">1.751,61</span>
<span id="t89" class="t" style="top:517.69px;line-height:14px;height:14px;font-size:11px;color:#000;right:1062.25px;">0</span>
<span id="t90" class="t" style="top:517.69px;line-height:14px;height:14px;font-size:11px;color:#000;right:986.50px;">39</span>
<span id="t91" class="t" style="top:517.69px;line-height:14px;height:14px;font-size:11px;color:#000;right:902.50px;">99,35</span>
<span id="t92" class="t" style="top:517.69px;line-height:14px;height:14px;font-size:11px;color:#000;right:778.25px;">1.748,87</span>
<span id="t93" class="t" style="top:536.69px;line-height:14px;height:14px;font-size:11px;color:#000;right:1062.25px;">0</span>
<span id="t94" class="t" style="top:536.69px;line-height:14px;height:14px;font-size:11px;color:#000;right:986.50px;">40</span>
<span id="t95" class="t" style="top:536.69px;line-height:14px;height:14px;font-size:11px;color:#000;right:902.50px;">99,17</span>
<span id="t96" class="t" style="top:536.69px;line-height:14px;height:14px;font-size:11px;color:#000;right:778.25px;">1.745,75</span>
<span id="t97" class="t" style="top:555.69px;line-height:14px;height:14px;font-size:11px;color:#000;right:1062.25px;">0</span>
<span id="t98" class="t" style="top:555.69px;line-height:14px;height:14px;font-size:11px;color:#000;right:986.50px;">41</span>
<span id="t99" class="t" style="top:555.69px;line-height:14px;height:14px;font-size:11px;color:#000;right:902.50px;">98,98</span>
<span id="t100" class="t" style="top:555.69px;line-height:14px;height:14px;font-size:11px;color:#000;right:778.25px;">1.742,26</span>
<span id="t101" class="t" style="top:574.69px;line-height:14px;height:14px;font-size:11px;color:#000;right:1062.25px;">0</span>
<span id="t102" class="t" style="top:574.69px;line-height:14px;height:14px;font-size:11px;color:#000;right:986.50px;">42</span>
<span id="t103" class="t" style="top:574.69px;line-height:14px;height:14px;font-size:11px;color:#000;right:902.50px;">98,76</span>
<span id="t104" class="t" style="top:574.69px;line-height:14px;height:14px;font-size:11px;color:#000;right:778.25px;">1.738,40</span>
<span id="t105" class="t" style="top:593.69px;line-height:14px;height:14px;font-size:11px;color:#000;right:1062.25px;">0</span>
<span id="t106" class="t" style="top:593.69px;line-height:14px;height:14px;font-size:11px;color:#000;right:986.50px;">43</span>
<span id="t107" class="t" style="top:593.69px;line-height:14px;height:14px;font-size:11px;color:#000;right:902.50px;">98,52</span>
<span id="t108" class="t" style="top:593.69px;line-height:14px;height:14px;font-size:11px;color:#000;right:778.25px;">1.734,17</span>
<span id="t109" class="t" style="top:612.69px;line-height:14px;height:14px;font-size:11px;color:#000;right:1062.25px;">0</span>
<span id="t110" class="t" style="top:612.69px;line-height:14px;height:14px;font-size:11px;color:#000;right:986.50px;">44</span>
<span id="t111" class="t" style="top:612.69px;line-height:14px;height:14px;font-size:11px;color:#000;right:902.50px;">98,25</span>
<span id="t112" class="t" style="top:612.69px;line-height:14px;height:14px;font-size:11px;color:#000;right:778.25px;">1.729,57</span>
<span id="t113" class="t" style="top:631.69px;line-height:14px;height:14px;font-size:11px;color:#000;right:1062.25px;">0</span>
<span id="t114" class="t" style="top:631.69px;line-height:14px;height:14px;font-size:11px;color:#000;right:986.50px;">45</span>
<span id="t115" class="t" style="top:631.69px;line-height:14px;height:14px;font-size:11px;color:#000;right:902.50px;">97,97</span>
<span id="t116" class="t" style="top:631.69px;line-height:14px;height:14px;font-size:11px;color:#000;right:778.25px;">1.724,60</span>
<span id="t117" class="t" style="top:650.69px;line-height:14px;height:14px;font-size:11px;color:#000;right:1062.25px;">0</span>
<span id="t118" class="t" style="top:650.69px;line-height:14px;height:14px;font-size:11px;color:#000;right:986.50px;">46</span>
<span id="t119" class="t" style="top:650.69px;line-height:14px;height:14px;font-size:11px;color:#000;right:902.50px;">97,67</span>
<span id="t120" class="t" style="top:650.69px;line-height:14px;height:14px;font-size:11px;color:#000;right:778.25px;">1.719,26</span>
<span id="t121" class="t" style="top:669.69px;line-height:14px;height:14px;font-size:11px;color:#000;right:1062.25px;">0</span>
<span id="t122" class="t" style="top:669.69px;line-height:14px;height:14px;font-size:11px;color:#000;right:986.50px;">47</span>
<span id="t123" class="t" style="top:669.69px;line-height:14px;height:14px;font-size:11px;color:#000;right:902.50px;">97,34</span>
<span id="t124" class="t" style="top:669.69px;line-height:14px;height:14px;font-size:11px;color:#000;right:778.25px;">1.713,56</span>
<div style="left:939px;top:364px;width:17px;height:326px;background:linear-gradient(90deg,#c0d1e9,#cfdcef 35%,#d6e2f2 60%,#d0ddef);"></div>
<svg style="left:943px;top:370px;" width="10" height="6" viewBox="0 0 10 6"><path d="M0.5 5.5h9L5 0.8z" fill="#4a5a8c"/></svg>
<svg style="left:943px;top:677px;" width="10" height="6" viewBox="0 0 10 6"><path d="M0.5 0.5h9L5 5.2z" fill="#4a5a8c"/></svg>
<div style="left:940px;top:518px;width:15px;height:17px;background:linear-gradient(90deg,#e6eef9,#cddbef);border:1px solid #92a8cc;border-radius:2px;box-shadow:inset 0 0 0 1px rgba(255,255,255,0.45);"></div>
<div style="left:944px;top:523px;width:7px;height:1px;background:#7d97c4;"></div>
<div style="left:944px;top:525px;width:7px;height:1px;background:#7d97c4;"></div>
<div style="left:944px;top:527px;width:7px;height:1px;background:#7d97c4;"></div>
<div style="left:944px;top:529px;width:7px;height:1px;background:#7d97c4;"></div>
<div style="left:961px;top:343px;width:379px;height:348px;background:#fff;"></div>
<svg style="left:961px;top:343px;" width="379" height="348" viewBox="0 0 379 348"><path d="M21 310.50H370" stroke="#efefef" stroke-width="1"/><path d="M21 277.17H370" stroke="#efefef" stroke-width="1"/><path d="M21 243.83H370" stroke="#efefef" stroke-width="1"/><path d="M21 210.50H370" stroke="#efefef" stroke-width="1"/><path d="M21 177.17H370" stroke="#efefef" stroke-width="1"/><path d="M21 143.83H370" stroke="#efefef" stroke-width="1"/><path d="M21 110.50H370" stroke="#efefef" stroke-width="1"/><path d="M21 77.17H370" stroke="#efefef" stroke-width="1"/><path d="M21 43.83H370" stroke="#efefef" stroke-width="1"/><path d="M21 10.50H370" stroke="#efefef" stroke-width="1"/><path d="M24.50 7V314" stroke="#efefef" stroke-width="1"/><path d="M166.80 7V314" stroke="#efefef" stroke-width="1"/><path d="M309.20 7V314" stroke="#efefef" stroke-width="1"/><path d="M24.60 263.83C33.42 257.89 47.37 253.21 53.05 244.67C65.01 226.65 71.12 197.94 81.49 178.17C88.76 164.30 99.60 147.76 109.93 136.17C117.24 127.97 130.18 121.78 138.38 114.33C147.81 105.77 159.20 94.67 166.83 84.50C176.83 71.16 185.99 39.56 195.27 38.50C203.62 37.55 216.46 64.86 223.72 78.00C234.09 96.79 242.26 122.39 252.16 141.50C259.90 156.43 273.36 172.69 280.61 187.83C291.00 209.58 296.13 243.84 309.05 260.50C313.76 266.57 328.68 260.96 337.49 261.17L337.49 310.50L24.60 310.50Z" fill="rgba(190,222,250,0.5)"/><path d="M24.60 263.83C33.42 257.89 47.37 253.21 53.05 244.67C65.01 226.65 71.12 197.94 81.49 178.17C88.76 164.30 99.60 147.76 109.93 136.17C117.24 127.97 130.18 121.78 138.38 114.33C147.81 105.77 159.20 94.67 166.83 84.50C176.83 71.16 185.99 39.56 195.27 38.50C203.62 37.55 216.46 64.86 223.72 78.00C234.09 96.79 242.26 122.39 252.16 141.50C259.90 156.43 273.36 172.69 280.61 187.83C291.00 209.58 296.13 243.84 309.05 260.50C313.76 266.57 328.68 260.96 337.49 261.17" fill="none" stroke="#2b8de3" stroke-width="2" stroke-linejoin="round"/><circle cx="24.60" cy="263.83" r="2.85" fill="#fff" stroke="#2b8de3" stroke-width="2.1"/><circle cx="53.05" cy="244.67" r="2.85" fill="#fff" stroke="#2b8de3" stroke-width="2.1"/><circle cx="81.49" cy="178.17" r="2.85" fill="#fff" stroke="#2b8de3" stroke-width="2.1"/><circle cx="109.93" cy="136.17" r="2.85" fill="#fff" stroke="#2b8de3" stroke-width="2.1"/><circle cx="138.38" cy="114.33" r="2.85" fill="#fff" stroke="#2b8de3" stroke-width="2.1"/><circle cx="166.83" cy="84.50" r="2.85" fill="#fff" stroke="#2b8de3" stroke-width="2.1"/><circle cx="195.27" cy="38.50" r="2.85" fill="#fff" stroke="#2b8de3" stroke-width="2.1"/><circle cx="223.72" cy="78.00" r="2.85" fill="#fff" stroke="#2b8de3" stroke-width="2.1"/><circle cx="252.16" cy="141.50" r="2.85" fill="#fff" stroke="#2b8de3" stroke-width="2.1"/><circle cx="280.61" cy="187.83" r="2.85" fill="#fff" stroke="#2b8de3" stroke-width="2.1"/><circle cx="309.05" cy="260.50" r="2.85" fill="#fff" stroke="#2b8de3" stroke-width="2.1"/><circle cx="337.49" cy="261.17" r="2.85" fill="#fff" stroke="#2b8de3" stroke-width="2.1"/></svg>
<span id="t125" class="t" style="top:647.56px;line-height:12.5px;height:12.5px;font-size:9.5px;color:#b3aca7;right:736.20px;">60</span>
<span id="t126" class="t" style="top:614.22px;line-height:12.5px;height:12.5px;font-size:9.5px;color:#b3aca7;right:736.20px;">80</span>
<span id="t127" class="t" style="top:580.89px;line-height:12.5px;height:12.5px;font-size:9.5px;color:#b3aca7;right:736.20px;">100</span>
<span id="t128" class="t" style="top:547.56px;line-height:12.5px;height:12.5px;font-size:9.5px;color:#b3aca7;right:736.20px;">120</span>
<span id="t129" class="t" style="top:514.22px;line-height:12.5px;height:12.5px;font-size:9.5px;color:#b3aca7;right:736.20px;">140</span>
<span id="t130" class="t" style="top:480.89px;line-height:12.5px;height:12.5px;font-size:9.5px;color:#b3aca7;right:736.20px;">160</span>
<span id="t131" class="t" style="top:447.56px;line-height:12.5px;height:12.5px;font-size:9.5px;color:#b3aca7;right:736.20px;">180</span>
<span id="t132" class="t" style="top:414.22px;line-height:12.5px;height:12.5px;font-size:9.5px;color:#b3aca7;right:736.20px;">200</span>
<span id="t133" class="t" style="top:380.89px;line-height:12.5px;height:12.5px;font-size:9.5px;color:#b3aca7;right:736.20px;">220</span>
<span id="t134" class="t" style="top:347.56px;line-height:12.5px;height:12.5px;font-size:9.5px;color:#b3aca7;right:736.20px;">240</span>
<span id="t135" class="t" style="top:662.36px;line-height:12.5px;height:12.5px;font-size:9.5px;color:#b3aca7;left:785.75px;width:400px;text-align:center;">Gen</span>
<span id="t136" class="t" style="top:662.36px;line-height:12.5px;height:12.5px;font-size:9.5px;color:#b3aca7;left:928.10px;width:400px;text-align:center;">Giu</span>
<span id="t137" class="t" style="top:662.36px;line-height:12.5px;height:12.5px;font-size:9.5px;color:#b3aca7;left:1070.25px;width:400px;text-align:center;">Nov</span>
<span id="t138" class="t" style="top:671.36px;line-height:12.5px;height:12.5px;font-size:9.5px;color:#b3aca7;left:956.50px;width:400px;text-align:center;">Mesi</span>
<span id="t139" class="t" style="top:697.69px;line-height:14px;height:14px;font-size:11px;color:#1a2a5c;letter-spacing:-0.255px;left:577.25px;">Gamma [γ]</span>
<span id="t140" class="t" style="top:721.94px;line-height:14px;height:14px;font-size:11px;color:#1a2a5c;letter-spacing:0.141px;left:577.25px;">Tilt [β]</span>
<div style="left:720px;top:695px;width:58px;height:20px;background:#d4e0f0;border:1px solid #859ec5;"></div>
<div style="left:761px;top:696px;width:1px;height:18px;background:#859ec5;"></div>
<svg style="left:765.5px;top:698px;" width="8" height="14" viewBox="0 0 8 14"><path d="M1.5 4.5L4 1.8L6.5 4.5z" fill="#b4c0d4"/><path d="M1.5 9.5L4 12.2L6.5 9.5z" fill="#b4c0d4"/></svg>
<div style="left:720px;top:719px;width:58px;height:20px;background:#d4e0f0;border:1px solid #859ec5;"></div>
<div style="left:761px;top:720px;width:1px;height:18px;background:#859ec5;"></div>
<svg style="left:765.5px;top:722px;" width="8" height="14" viewBox="0 0 8 14"><path d="M1.5 4.5L4 1.8L6.5 4.5z" fill="#b4c0d4"/><path d="M1.5 9.5L4 12.2L6.5 9.5z" fill="#b4c0d4"/></svg>
<span id="t141" class="t" style="top:697.69px;line-height:14px;height:14px;font-size:11px;color:#000;right:956.00px;">0</span>
<span id="t142" class="t" style="top:721.94px;line-height:14px;height:14px;font-size:11px;color:#000;right:956.00px;">31</span>
<span id="t143" class="t" style="top:698.09px;line-height:14px;height:14px;font-size:11px;color:#1a2a5c;letter-spacing:-0.027px;left:781.30px;">Irradiazione annua [kwh/m2]</span>
<div style="left:924px;top:695px;width:110px;height:20px;background:#d4e0f0;border:1px solid #859ec5;"></div>
<span id="t144" class="t" style="top:697.69px;line-height:14px;height:14px;font-size:11px;color:#000;letter-spacing:0.096px;left:928.00px;">1.760,30</span>
<div style="left:1107px;top:770px;width:75px;height:22px;background:linear-gradient(#e3ecf8,#d6e2f3 50%,#cddbef);border:1px solid #9fb2d1;border-radius:3px;"></div>
<span id="t145" class="t" style="top:773.94px;line-height:14px;height:14px;font-size:11px;color:#1a2a5c;letter-spacing:0.292px;left:1120.10px;">&lt; Indietro</span>
<div style="left:1186px;top:770px;width:75px;height:22px;background:linear-gradient(#e3ecf8,#d6e2f3 50%,#cddbef);border:1px solid #9fb2d1;border-radius:3px;box-shadow:inset 0 0 0 1px #fff;"></div>
<span id="t146" class="t" style="top:773.94px;line-height:14px;height:14px;font-size:11px;color:#1a2a5c;letter-spacing:0.426px;left:1201.40px;">Avanti &gt;</span>
<div style="left:1272px;top:770px;width:75px;height:22px;background:linear-gradient(#e3ecf8,#d6e2f3 50%,#cddbef);border:1px solid #9fb2d1;border-radius:3px;"></div>
<span id="t147" class="t" style="top:773.94px;line-height:14px;height:14px;font-size:11px;color:#1a2a5c;letter-spacing:-0.284px;left:1291.50px;">Annulla</span>
<div style="left:1347px;top:800px;width:2px;height:2px;background:#6f8db5;"></div>
<div style="left:1351px;top:800px;width:2px;height:2px;background:#6f8db5;"></div>
<div style="left:1355px;top:800px;width:2px;height:2px;background:#6f8db5;"></div>
<div style="left:1351px;top:796px;width:2px;height:2px;background:#6f8db5;"></div>
<div style="left:1355px;top:796px;width:2px;height:2px;background:#6f8db5;"></div>
<div style="left:1355px;top:792px;width:2px;height:2px;background:#6f8db5;"></div>
</body></html>
